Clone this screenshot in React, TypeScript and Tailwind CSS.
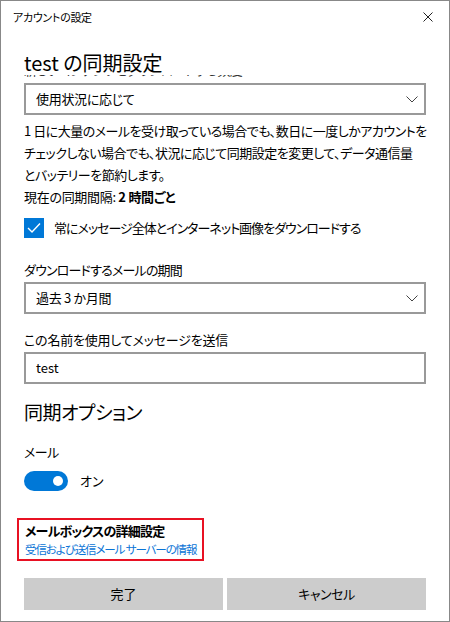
import React from "react";

const font = "font-['Noto_Sans_CJK_JP','Noto_Sans',sans-serif] [font-feature-settings:'palt']";

function Chevron() {
  return (
    <svg width="12" height="7" viewBox="0 0 12 7" fill="none" stroke="#444" strokeWidth="1">
      <path d="M0.5 0.5 L6 6 L11.5 0.5" />
    </svg>
  );
}

function Select({ value }: { value: string }) {
  return (
    <div className="h-[32px] border-2 border-[#999] flex items-center justify-between pl-[10px] pr-[6px]">
      <span className="text-[13px] leading-[20px] tracking-[-0.3px] text-black">{value}</span>
      <Chevron />
    </div>
  );
}

export default function App() {
  return (
    <div className={`${font} w-[450px] h-[622px] bg-white border border-[#888] flex flex-col text-black`}>
      {/* タイトルバー */}
      <div className="h-[39px] flex justify-between pl-[12px] pr-[16px]">
        <span className="mt-[8px] text-[11px] leading-[16px] tracking-[-0.3px]">アカウントの設定</span>
        <svg className="mt-[11px]" width="10" height="10" viewBox="0 0 10 10" stroke="#222" strokeWidth="1">
          <path d="M0.5 0.5 L9.5 9.5 M9.5 0.5 L0.5 9.5" />
        </svg>
      </div>

      <div className="px-[23px] flex flex-col">
        <h1 className="mt-[11px] text-[20px] leading-[24px] font-normal">test の同期設定</h1>
        {/* スクロールで隠れた行 */}
        <div className="h-[4px] overflow-hidden">
          <p className="-mt-[15px] text-[13px] leading-[20px] tracking-[-0.5px] text-[#333] whitespace-nowrap">
            新しいコンテンツをダウンロードする頻度
          </p>
        </div>

        <div className="mt-[4px]">
          <Select value="使用状況に応じて" />
        </div>

        <p className="mt-[5px] text-[13px] leading-[22px] tracking-[-0.5px] whitespace-nowrap">
          1 日に大量のメールを受け取っている場合でも、数日に一度しかアカウントを
          <br />
          チェックしない場合でも、状況に応じて同期設定を変更して、データ通信量
          <br />
          とバッテリーを節約します。
        </p>
        <p className="text-[13px] leading-[22px] tracking-[-0.3px]">
          現在の同期間隔: <span className="font-bold">2 時間ごと</span>
        </p>

        <div className="mt-[10px] flex items-center gap-[10px]">
          <div className="w-[20px] h-[20px] bg-[#0078d7] flex items-center justify-center">
            <svg width="14" height="12" viewBox="0 0 14 12" fill="none" stroke="#fff" strokeWidth="1.4">
              <path d="M1 6 L5 10 L13 1.5" />
            </svg>
          </div>
          <span className="text-[13px] leading-[20px] tracking-[-1px]">常にメッセージ全体とインターネット画像をダウンロードする</span>
        </div>

        <p className="mt-[22px] text-[13px] leading-[20px] tracking-[-0.8px]">ダウンロードするメールの期間</p>
        <div className="mt-[2px]">
          <Select value="過去 3 か月間" />
        </div>

        <p className="mt-[16px] text-[13px] leading-[20px] tracking-[-0.2px]">この名前を使用してメッセージを送信</p>
        <div className="mt-[2px] h-[32px] border-2 border-[#999] flex items-center pl-[10px]">
          <span className="text-[13px] leading-[20px]">test</span>
        </div>

        <h2 className="mt-[14px] text-[19px] leading-[28px] tracking-[-0.5px] font-normal">同期オプション</h2>
        <p className="mt-[16px] text-[13px] leading-[20px] tracking-[-0.5px]">メール</p>
        <div className="mt-[9px] flex items-center gap-[12px]">
          <div className="w-[44px] h-[20px] rounded-full bg-[#0078d7] flex items-center justify-end pr-[5px]">
            <div className="w-[10px] h-[10px] rounded-full bg-white" />
          </div>
          <span className="text-[13px] leading-[20px]">オン</span>
        </div>

        {/* 詳細設定リンク */}
        <div className="mt-[27px] -ml-[7px] w-fit border-2 border-[#e81123] pl-[6px] pr-[6px] pt-[2px] pb-[1px]">
          <p className="text-[13px] leading-[18px] tracking-[-0.8px] font-bold">メールボックスの詳細設定</p>
          <p className="text-[11.5px] leading-[18px] tracking-[-1.1px] text-[#0a74d6]">受信および送信メール サーバーの情報</p>
        </div>

        <div className="mt-[17px] grid grid-cols-2 gap-[4px]">
          <button className="h-[32px] bg-[#cccccc] text-[13px] leading-[20px]">完了</button>
          <button className="h-[32px] bg-[#cccccc] text-[13px] leading-[20px] tracking-[-0.5px]">キャンセル</button>
        </div>
      </div>
    </div>
  );
}
